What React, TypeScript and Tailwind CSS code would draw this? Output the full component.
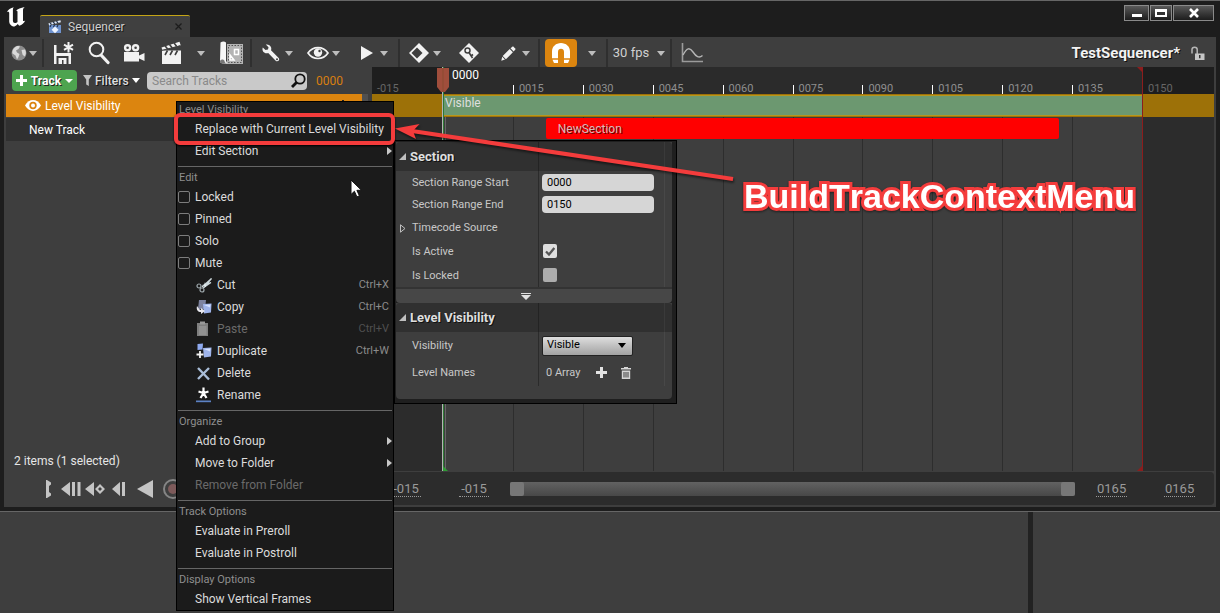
import React from "react";

type Kids = { children?: React.ReactNode };

const Caret = ({ dark = false }: { dark?: boolean }) => (
  <svg width="8" height="5" viewBox="0 0 8 5" className={dark ? "shrink-0 text-black" : "shrink-0 text-[#bdbdbd]"}>
    <path d="M0 0h8L4 5z" fill="currentColor" />
  </svg>
);

const Sep = () => <span className="h-full w-0.5 shrink-0 bg-[#2f2f2f]" />;

function Tool({ label, className, children }: Kids & { label: string; className: string }) {
  return (
    <button aria-label={label} className={`flex h-full shrink-0 items-center justify-center text-[#f2f2f2] ${className}`}>
      {children}
    </button>
  );
}

const UnrealLogo = () => (
  <svg width="20" height="20" viewBox="0 0 19 20" fill="#fff" className="ml-1.5 mt-1.5 shrink-0">
    <path d="M.3 5.2C1.5 2.600 4 .8 7.400.2 6.600 1 6.400 1.700 6.400 3v10.600c0 1.700.8 2.500 2 2.500 1 0 1.900-.5 2.600-1.200V5c0-1-.5-1.500-1.500-1.200C11.200 2 14.200.7 18.200 0c-1.200 1-1.700 2-1.700 3.200v10c0 1 .5 1.200 2.200.3-1 2.400-3.200 4.400-6 5.200l-1.500-1.700c-1 1.500-2.700 2.600-4.600 2.600-2.200-1-3.900-2.600-3.900-5.100V6.300c0-1.600-.9-1.900-2.400-1.100z" />
  </svg>
);

const SequencerIcon = () => (
  <svg width="14" height="14" viewBox="0 0 14 14">
    <path d="M1 5h12v8H1z" fill="#6f93cf" />
    <path d="M.5 3.200 12.500.2l.4 2L1 5.200z" fill="#dfe8f5" />
    <path d="m2 2.800 1.600 1.800M5.200 2l1.600 1.800M8.400 1.200 10 3M3 5 2 7M6.500 5l-1 2M10 5 9 7" stroke="#26344f" strokeWidth="1.200" />
    <path d="m7 6.500 3.500 3.200L7 13.200 3.600 9.700z" fill="#eef4ff" />
  </svg>
);

const GlobeIcon = () => (
  <svg width="16" height="16" viewBox="0 0 16 16">
    <circle cx="8" cy="8" r="7.500" fill="#8b8b8b" />
    <path d="M3 3.200C5 .8 8 .6 9 1.500L7.500 4 5 5.500 6 7.500 8.500 9 7.500 12 6 14.500 4.500 10.500 1.500 8.500C.8 6.500 2 4.500 3 3.200zM10.500 5 14 4.500c1.500 3 1 5-.5 7L11.500 9.500z" fill="#d9d9d9" />
  </svg>
);

const SaveIcon = () => (
  <svg width="22" height="24" viewBox="0 0 22 24" fill="currentColor">
    <path d="M2 4h2.500v8H9v2H4.500v9H2zM2 12h17v11h-2.500v-8H2z" />
    <path d="M6.500 17h8v6h-3v-4H10v4H6.500z" />
    <path d="M16.500 1v10.500M12 3.600l9 5.200M21 3.600l-9 5.200" stroke="currentColor" strokeWidth="2" />
  </svg>
);

const MagnifierIcon = () => (
  <svg width="22" height="24" viewBox="0 0 22 24" fill="none" stroke="currentColor">
    <circle cx="8.500" cy="8.500" r="6.800" strokeWidth="2" />
    <path d="m13.500 14.500 6.500 7" strokeWidth="3.200" strokeLinecap="round" />
  </svg>
);

const CameraIcon = () => (
  <svg width="22" height="20" viewBox="0 0 22 20" fill="currentColor">
    <path fillRule="evenodd" d="M4.600 1a3.700 3.700 0 1 1 0 7.400 3.700 3.700 0 0 1 0-7.400zm0 2.400a1.300 1.300 0 1 0 0 2.600 1.300 1.300 0 0 0 0-2.600zM12.600 1a3.700 3.700 0 1 1 0 7.400 3.700 3.700 0 0 1 0-7.400zm0 2.400a1.300 1.300 0 1 0 0 2.600 1.300 1.300 0 0 0 0-2.600z" />
    <path d="M1 9h15v9.500H1zM15 13l6.500-3v8L15 15z" />
  </svg>
);

const ClapperIcon = () => (
  <svg width="21" height="24" viewBox="0 0 21 24" fill="currentColor">
    <path d="M1 9.500h19V23H1z" />
    <path d="M.5 6.500 18.500.8l1.200 3.400L1.500 9.500z" />
    <path d="m4 4.800 2.600 3.200M8.500 3.500l2.600 3.200M13 2l2.600 3.200M6.500 9.500 4 14M11.500 9.500 9 14M16.500 9.500 14 14" stroke="#3e3e3e" strokeWidth="1.600" />
    <path d="M1 9.300 19 4.800" stroke="#3e3e3e" strokeWidth="1" />
  </svg>
);

const BlueprintIcon = () => (
  <svg width="25" height="24" viewBox="0 0 25 24">
    <path d="M8 3h16v20H5l3-3z" fill="#b4b4b4" />
    <path d="M9.500 4.500h13v17h-13z" fill="none" stroke="#555" strokeDasharray="1.500 1.500" />
    <path d="M15.500 8.500h4v5h-4zM11 14v5h4z" fill="none" stroke="#fff" strokeWidth="1.500" />
    <path d="M1.500 1.500c2-1.500 4-1.500 5.500 0v18c0 2 1 3 2 3H4c-1.800 0-3-1-3-2.500z" fill="#f6f6f6" />
    <path d="M1 20c1-2 4-2 4.500 0 .3 1.500 1 2.500 3 2.500H4C2 22.500 1 21.500 1 20z" fill="#777" />
  </svg>
);

const WrenchIcon = () => (
  <svg width="18" height="18" viewBox="0 0 18 18" fill="currentColor">
    <path d="M3.800.5 6.500 3.200 6 5.500 3.500 6 .8 3.500C-.2 6 1 8.500 3.500 9.200c1 .3 2 .1 2.700-.2l7.500 7.800c2 1.700 4.600-.8 3-2.800L9 6.300c.3-.8.400-1.800.1-2.700C8.400 1.200 6 0 3.800.5zM15 14.200a1 1 0 1 1 0 2 1 1 0 0 1 0-2z" fillRule="evenodd" />
  </svg>
);

const EyeIcon = () => (
  <svg width="22" height="14" viewBox="0 0 22 14">
    <path d="M1 7c5-7.300 15-7.300 20 0-5 7.300-15 7.300-20 0z" fill="none" stroke="currentColor" strokeWidth="1.700" />
    <circle cx="11" cy="6.500" r="4.200" fill="currentColor" />
    <circle cx="12.500" cy="5" r="1.200" fill="#3e3e3e" />
  </svg>
);

const KeyNextIcon = () => (
  <svg width="20" height="20" viewBox="0 0 20 20">
    <path d="M10 0l10 10-10 10L0 10z" fill="currentColor" />
    <path d="m8 4.500 5.500 5.500L8 15.500 2.500 10z" fill="#3e3e3e" />
  </svg>
);

const AutoKeyIcon = () => (
  <svg width="20" height="20" viewBox="0 0 20 20">
    <path d="M10 0l10 10-10 10L0 10z" fill="currentColor" />
    <circle cx="8.500" cy="7.500" r="2.500" fill="none" stroke="#3e3e3e" strokeWidth="1.500" />
    <path d="m10 9.500 3.500 5.500M12 13l2-1.500" stroke="#3e3e3e" strokeWidth="1.600" fill="none" />
  </svg>
);

const PencilIcon = () => (
  <svg width="15" height="15" viewBox="0 0 15 15" fill="currentColor">
    <path d="M9.500 2.300 12 .3 14.700 3l-2 2.500zM8.700 3.100l3.200 3.200-7 7L1.700 10zM1.200 10.800 4 13.600.3 14.700z" />
  </svg>
);

const MagnetIcon = () => (
  <svg width="20" height="22" viewBox="0 0 20 22" fill="#fff">
    <path d="M1 16.200V9.500C1 4.500 5 1 10 1s9 3.500 9 8.500v6.700h-6V10c0-2-1.200-3.200-3-3.200S7 8 7 10v6.200zM1.500 17.800H7V21H3zM13 17.800h5.500L17 21h-4z" />
  </svg>
);

const CurveIcon = () => (
  <svg width="22" height="20" viewBox="0 0 22 20" fill="none" stroke="#9b9b9b">
    <path d="M1.500 0v18.500H22" strokeWidth="1.600" />
    <path d="M2 12C6 4 9 4.500 12 9s6 6.500 9.500 3.500" stroke="#b5b5b5" strokeWidth="1.400" />
  </svg>
);

const UnlockIcon = () => (
  <svg width="14" height="15" viewBox="0 0 14 15">
    <path d="M1 7.500V3.500C1 .5 6.200.5 6.200 3.500V8" fill="none" stroke="#b5b5b5" strokeWidth="1.500" />
    <path d="M4 7.500h9.500V14H4z" fill="#c6c6c6" />
    <path d="M8 9h1.500v3.200H8z" fill="#333" />
  </svg>
);

const PlusIcon = ({ className }: { className: string }) => (
  <svg width="11" height="11" viewBox="0 0 11 11" className={className}>
    <path d="M4 0h3v4h4v3H7v4H4V7H0V4h4z" fill="currentColor" />
  </svg>
);

const TrashIcon = () => (
  <svg width="10" height="12" viewBox="0 0 10 12">
    <path d="M3 1V0h4v1h3v1.500H0V1zM.8 3.500h8.400V12H.8z" fill="#d6d6d6" />
    <path d="M3 5v5.500M5 5v5.500M7 5v5.500" stroke="#3e3e3e" />
  </svg>
);

/* ---------- title bar and toolbar ---------- */

function TitleBar() {
  const btn = "flex h-4 items-center justify-center border border-[#8a8a8a] bg-gradient-to-b from-[#5a5a5a] to-[#1d1d1d]";
  return (
    <header className="flex h-9 items-stretch">
      <UnrealLogo />
      <div className="ml-3.5 mt-3.5 flex w-[150px] items-center rounded-t-xs border-t border-[#c4a516] bg-[#404040] pl-2 pr-2 text-[12px] text-[#cfcfcf] [text-shadow:1px_1px_0_#1a1a1a]">
        <SequencerIcon />
        <span className="ml-1.5 flex-1">Sequencer</span>
        <button aria-label="Close tab">
          <svg width="7" height="7" viewBox="0 0 7 7" stroke="#1c1c1c" strokeWidth="1.300">
            <path d="m.5.500 6 6m0-6-6 6" />
          </svg>
        </button>
      </div>
      <div className="ml-auto mr-1.5 mt-1 flex gap-px">
        <button aria-label="Minimize" className={`${btn} w-[25px]`}>
          <span className="mt-1 h-[3px] w-2.5 bg-white" />
        </button>
        <button aria-label="Maximize" className={`${btn} w-[22px]`}>
          <span className="h-2 w-3 border-2 border-t-[3px] border-white bg-[#333]" />
        </button>
        <button aria-label="Close" className={`${btn} w-[41px]`}>
          <svg width="10" height="10" viewBox="0 0 10 10" stroke="#fff" strokeWidth="2.600">
            <path d="m1 1 8 8m0-8L1 9" />
          </svg>
        </button>
      </div>
    </header>
  );
}

function Toolbar() {
  return (
    <div className="flex h-[30px] items-stretch pt-0.5" role="toolbar" aria-label="Sequencer tools">
      <Tool label="World" className="w-[38px] gap-0.5 pl-0.5"><GlobeIcon /><Caret /></Tool>
      <Sep />
      <Tool label="Save" className="w-[38px]"><SaveIcon /></Tool>
      <Tool label="Find in content browser" className="w-[34px]"><MagnifierIcon /></Tool>
      <Tool label="Create camera" className="w-9"><CameraIcon /></Tool>
      <Tool label="Render movie" className="w-[38px]"><ClapperIcon /></Tool>
      <Tool label="Render options" className="w-[22px]"><Caret /></Tool>
      <Tool label="Director blueprint" className="w-[38px]"><BlueprintIcon /></Tool>
      <Sep />
      <Tool label="Actions" className="w-[50px] gap-[5px]"><WrenchIcon /><Caret /></Tool>
      <Tool label="View options" className="w-[42px] gap-[3px]"><EyeIcon /><Caret /></Tool>
      <Tool label="Playback options" className="w-[54px] gap-[7px] pl-1.5">
        <svg width="12" height="14" viewBox="0 0 12 14" fill="currentColor"><path d="M0 0l12 7-12 7z" /></svg>
        <Caret />
      </Tool>
      <Sep />
      <Tool label="Key options" className="w-[50px] gap-1"><KeyNextIcon /><Caret /></Tool>
      <Tool label="Auto key" className="w-[38px]"><AutoKeyIcon /></Tool>
      <Tool label="Edit options" className="w-[50px] gap-1.5 pl-1"><PencilIcon /><Caret /></Tool>
      <Sep />
      <Tool label="Snapping" className="ml-[5px] w-8 rounded-sm bg-[#dc850f]"><MagnetIcon /></Tool>
      <Tool label="Snapping options" className="w-[29px]"><Caret /></Tool>
      <Sep />
      <Tool label="Frame rate" className="w-[62px] gap-2"><span className="text-[13px] text-[#d0d0d0]">30 fps</span><Caret /></Tool>
      <Sep />
      <Tool label="Curve editor" className="w-10"><CurveIcon /></Tool>
      <h1 className="ml-auto self-center text-[15px] leading-5 font-bold text-[#f2f2f2] [text-shadow:1px_1px_0_#111]">TestSequencer*</h1>
      <Tool label="Unlock" className="w-9"><UnlockIcon /></Tool>
    </div>
  );
}

/* ---------- outliner ---------- */

const Transport = () => (
  <div className="flex h-9 items-center pl-[34px] text-[#c4c4c4]">
    {[
      { label: "Set start", cls: "w-5", w: 5, d: "M0 0h1L5 2.500V4.500L3 6v6l2 1.500v2L1 18H0z" },
      { label: "Go to front", cls: "w-[26px]", w: 20, d: "M9 2v14L0 9zM11 2h3v14h-3zM16.500 2h3v14h-3z" },
      { label: "Previous key", cls: "w-[22px]", w: 20, d: "M9 2v14L0 9zM15 4l5 5-5 5-5-5zm0 3-2 2 2 2 2-2z" },
      { label: "Step back", cls: "w-[26px]", w: 14, d: "M8 2v14L0 9zM10 2h3v14h-3z" },
      { label: "Play reverse", cls: "w-[26px]", w: 16, d: "M16 0v18L0 9z" },
    ].map((b) => (
      <button key={b.label} aria-label={b.label} className={`flex shrink-0 justify-center ${b.cls}`}>
        <svg width={b.w} height="18" viewBox={`0 0 ${b.w} 18`} fill="currentColor" fillRule="evenodd"><path d={b.d} /></svg>
      </button>
    ))}
    <button aria-label="Record" className="ml-[5px] size-5 shrink-0 rounded-full border-2 border-[#858585] p-[3px]">
      <span className="block size-full rounded-full bg-[#7d5a5a]" />
    </button>
  </div>
);

function Outliner() {
  return (
    <section className="flex w-[368px] shrink-0 flex-col" aria-label="Tracks">
      <div className="flex h-[27px] items-center pl-2">
        <button className="flex h-[21px] w-[65px] items-center justify-center gap-1 rounded-sm bg-[#4da44f] text-[12px] font-bold text-white [text-shadow:1px_1px_0_#222]">
          <PlusIcon className="text-white" />
          Track
          <svg width="8" height="4" viewBox="0 0 8 4"><path d="M0 0h8L4 4z" fill="#fff" /></svg>
        </button>
        <button className="ml-1.5 flex w-[57px] items-center gap-[3px] text-[12px] font-medium text-[#dedede] [text-shadow:1px_1px_0_#111]">
          <svg width="9" height="11" viewBox="0 0 9 11"><path d="M0 0h9L5.800 4.500V11L3.200 9.500v-5z" fill="#c4c4c4" /></svg>
          Filters
          <svg width="8" height="5" viewBox="0 0 8 5"><path d="M0 0h8L4 5z" fill="#fff" /></svg>
        </button>
        <div className="ml-[7px] flex h-[18px] w-40 items-center rounded-sm bg-[#c9c9c9] pl-[5px] pr-px">
          <input type="search" aria-label="Search Tracks" placeholder="Search Tracks" className="w-full min-w-0 bg-transparent text-[12px] leading-4 text-black outline-none placeholder:text-[#8a8a8a]" />
          <svg width="15" height="15" viewBox="0 0 15 15" fill="none" stroke="#111" className="shrink-0">
            <circle cx="9" cy="6" r="4.700" strokeWidth="1.800" />
            <path d="m5.500 9.500-4.500 4.500" strokeWidth="2.800" />
          </svg>
        </div>
        <span className="ml-[9px] text-[12px] text-[#d97f10]">0000</span>
      </div>

      <ul className="flex-1 text-[12px] text-white">
        <li className="flex h-[23px]">
          <div className="ml-0.5 flex w-[356px] items-center bg-[#dc850f] pl-[19px]">
            <svg width="16" height="11" viewBox="0 0 16 11">
              <path d="M0 5.500c4-7.200 12-7.200 16 0-4 7.200-12 7.200-16 0z" fill="#fff" />
              <circle cx="8" cy="5.500" r="3.700" fill="#dc850f" />
              <circle cx="8" cy="5.500" r="2" fill="#fff" />
            </svg>
            <span className="ml-1">Level Visibility</span>
            <svg width="10" height="12" viewBox="0 0 10 12" className="ml-auto mr-3.5"><path d="M4 0h2v4h4v3H6v4H4V7H0V4h4z" fill="#222" /></svg>
          </div>
          <div className="w-1.5 bg-[#505050]" />
        </li>
        <li className="ml-0.5 mt-px flex h-[23px] w-[362px] items-center bg-[#303030] pl-[23px]">New Track</li>
      </ul>
      <p className="flex h-5 items-center pl-2.5 text-[12px] text-[#e6e6e6]">2 items (1 selected)</p>
      <Transport />
    </section>
  );
}

/* ---------- timeline ---------- */

const TIMES = ["0000", "0015", "0030", "0045", "0060", "0075", "0090", "0105", "0120", "0135"];
const COLS = "grid grid-cols-[71px_repeat(10,minmax(0,1fr))_72px]";

const RangeValue = ({ children, className }: Kids & { className: string }) => (
  <button className={`h-4 border-b border-dotted border-[#9a9a9a] px-px leading-4 ${className}`}>{children}</button>
);

function Timeline() {
  return (
    <section className="mr-0.5 flex min-w-0 flex-1 flex-col" aria-label="Timeline">
      <div className="relative flex flex-1 flex-col">
        <div className={`${COLS} h-[27px] items-stretch bg-[#2b2b2b] text-[11px] text-[#8f8f8f]`}>
          <div className="flex items-end bg-[#1e1e1e] pl-[5px] leading-2.5 text-[#666]">-015</div>
          {TIMES.map((t, i) => (
            <div key={t} className={i === 0 ? "pl-[9px] text-[12px] leading-4 text-white" : "flex items-end"}>
              {i > 0 && <span className="mr-[5px] h-[9px] w-px bg-white" />}
              <span className={i > 0 ? "leading-2.5" : ""}>{t}</span>
            </div>
          ))}
          <div className="flex items-end bg-[#1e1e1e] text-[#666]">
            <span className="mr-[5px] h-[9px] w-px bg-[#bbb]" />
            <span className="leading-2.5">0150</span>
          </div>
        </div>

        <div className="flex h-[23px] bg-[#9d7108]">
          <div className="ml-[71px] mr-[72px] mt-px mb-px flex-1 border-y border-[#b8961c] bg-[#6c9870] pl-0.5 text-[12px] leading-[14px] text-[#dfdfdf]">Visible</div>
        </div>

        <div className={`${COLS} min-h-[354px] flex-1`}>
          <div className="bg-[#2c2c2c]" />
          <div className="col-span-10 col-start-2 row-start-1 grid grid-cols-10">
            {TIMES.map((t) => (
              <div key={t} className="border-l border-[#2d2d2d]" />
            ))}
          </div>
          <div className="col-span-10 col-start-2 row-start-1">
            <div className="ml-[14.7%] mt-px flex h-[21px] w-[73.4%] items-center rounded-xs bg-[#ff0000] pl-3 text-[12px] text-[#dcb8b8] [text-shadow:1px_1px_0_#600]">NewSection</div>
          </div>
          <div className="col-start-12 bg-[#2c2c2c]" />
        </div>

        <div className="absolute inset-y-0 left-[70px] w-px bg-[#b4b4b4]" />
        <div className="absolute inset-y-0 left-[71px] w-px bg-[#2f7a35]" />
        <div className="absolute bottom-0 left-[73px] top-[50px] w-px bg-[#666]" />
        <svg width="12" height="25" viewBox="0 0 12 25" className="absolute left-[65px] top-px">
          <path d="M0 0h12v19l-4 5H4l-4-5z" fill="#a04e3c" />
          <path d="M6 0v24" stroke="#8a4a30" />
        </svg>
        <div className="absolute inset-y-0 right-[71px] w-px bg-[#8c1d1d]" />
        <svg width="5" height="5" viewBox="0 0 5 5" className="absolute right-[72px] top-0"><path d="M0 0h5v5z" fill="#8c1d1d" /></svg>
        <svg width="5" height="5" viewBox="0 0 5 5" className="absolute bottom-0 right-[72px]"><path d="M5 0v5H0z" fill="#8c1d1d" /></svg>
        <svg width="5" height="5" viewBox="0 0 5 5" className="absolute bottom-0 left-[71px]"><path d="M0 0v5h5z" fill="#2f9a35" /></svg>
      </div>

      <div className="mb-0.5 mt-px flex h-[33px] items-center rounded-sm bg-[#2c2c2c] pl-[19px] pr-[19px] text-[13px] text-[#9a9a9a]">
        <RangeValue className="w-[30px]">-015</RangeValue>
        <RangeValue className="ml-[38px] w-[30px]">-015</RangeValue>
        <div className="ml-[21px] flex h-3.5 flex-1 justify-between rounded-xs bg-gradient-to-b from-[#626262] to-[#484848]">
          <span className="w-3.5 rounded-xs bg-[#777]" />
          <span className="w-3.5 rounded-xs bg-[#777]" />
        </div>
        <RangeValue className="ml-[21px] w-[31px]">0165</RangeValue>
        <RangeValue className="ml-[37px] w-[31px]">0165</RangeValue>
      </div>
    </section>
  );
}

/* ---------- context menu ---------- */

const Heading = ({ children, className = "h-[18px] pt-0.5" }: Kids & { className?: string }) => (
  <div className={`flex items-center pl-0.5 text-[11px] text-[#8e8e8e] ${className}`}>{children}</div>
);

const Rule = () => (
  <div className="h-1.5 px-px pt-1"><hr className="border-t border-[#666]" /></div>
);

const CheckItem = ({ children }: Kids) => (
  <label className="flex h-[22px] items-center gap-[5px] pl-px">
    <input type="checkbox" className="size-3 appearance-none rounded-xs border border-[#7d7d7d]" />
    {children}
  </label>
);

function Item({ children, icon, keys, submenu, disabled }: Kids & { icon?: React.ReactNode; keys?: string; submenu?: boolean; disabled?: boolean }) {
  return (
    <button disabled={disabled} className={`flex h-[22px] w-full items-center pl-[18px] text-left ${submenu ? "pr-px" : "pr-1"} ${disabled ? "text-[#6a6a6a]" : ""}`}>
      {icon && <span className="flex w-[22px] pl-px">{icon}</span>}
      <span className="flex-1 whitespace-nowrap">{children}</span>
      {keys && <span className={disabled ? "text-[11px] text-[#505050]" : "text-[11px] text-[#8b8b8b]"}>{keys}</span>}
      {submenu && (
        <svg width="5" height="8" viewBox="0 0 5 8"><path d="M0 0l5 4-5 4z" fill="#c8c8c8" /></svg>
      )}
    </button>
  );
}

const CutIcon = (
  <svg width="16" height="16" viewBox="0 0 16 16" fill="none">
    <path d="M6 10 15.500 1.500 8 10.500M6.500 8.500 15 5.500 7 11" stroke="#cdd9dd" strokeWidth="1.200" />
    <circle cx="3" cy="9" r="2" stroke="#9ea8ac" strokeWidth="1.200" />
    <circle cx="6" cy="13" r="2" stroke="#9ea8ac" strokeWidth="1.200" />
    <path d="m9 5-1 4 2 1z" fill="#e8f0f2" />
  </svg>
);
const CopyIcon = (
  <svg width="16" height="16" viewBox="0 0 16 16">
    <path d="M3 1h7l-1 9H2z" fill="#7d83a0" />
    <path d="m7 5 8.500-.5-.5 9-7 1z" fill="#9fb4ea" />
    <path d="m8 6 6.500-.5-.5 3z" fill="#d4e0ff" />
    <path d="M1 7c-1 4 1 6 4 6v2l4-3-4-3v2c-1.500 0-2-1.500-4-4z" fill="#e8e8ee" />
  </svg>
);
const PasteIcon = (
  <svg width="14" height="16" viewBox="0 0 14 16">
    <path d="M1 2h11v13H1z" fill="#7f7f7f" />
    <path d="M4 .5h5v3H4z" fill="#999" />
    <path d="M3 5h7.500v9H3z" fill="#919191" />
  </svg>
);
const DuplicateIcon = (
  <svg width="16" height="16" viewBox="0 0 16 16">
    <path d="M1.500 1 7 .5l-.5 6-5 .5z" fill="#8faaf0" />
    <path d="m7 5 8.500-.5-.5 9-7 1z" fill="#9fb4ea" />
    <path d="m8 6 6.500-.5-.5 3z" fill="#d4e0ff" />
    <path d="M4 8v7M.5 11.500h7" stroke="#f2f2f2" strokeWidth="1.800" />
  </svg>
);
const DeleteIcon = (
  <svg width="15" height="15" viewBox="0 0 15 15" stroke="#a9bdd8" strokeWidth="2.400">
    <path d="m2 2 11 11.500M13 2 2 13" />
  </svg>
);
const RenameIcon = (
  <svg width="15" height="16" viewBox="0 0 15 16">
    <path d="M7.500.5V6M2.500 4.500l5 1.500M12.500 4.500l-5 1.500M7.500 6l-3 5M7.500 6l3 5" stroke="#fff" strokeWidth="2.200" />
    <path d="M0 13.500h15v1.700H0z" fill="#5c82c4" />
  </svg>
);

function ContextMenu() {
  return (
    <nav aria-label="Track menu" className="absolute left-44 top-[101px] w-[218px] border border-black bg-[#1b1b1b] text-[12px] text-[#dcdcdc]">
      <Heading className="h-4">Level Visibility</Heading>
      <Item>Replace with Current Level Visibility</Item>
      <Item submenu>Edit Section</Item>
      <Rule />
      <Heading>Edit</Heading>
      <CheckItem>Locked</CheckItem>
      <CheckItem>Pinned</CheckItem>
      <CheckItem>Solo</CheckItem>
      <CheckItem>Mute</CheckItem>
      <Item icon={CutIcon} keys="Ctrl+X">Cut</Item>
      <Item icon={CopyIcon} keys="Ctrl+C">Copy</Item>
      <Item icon={PasteIcon} keys="Ctrl+V" disabled>Paste</Item>
      <Item icon={DuplicateIcon} keys="Ctrl+W">Duplicate</Item>
      <Item icon={DeleteIcon}>Delete</Item>
      <Item icon={RenameIcon}>Rename</Item>
      <Rule />
      <Heading>Organize</Heading>
      <Item submenu>Add to Group</Item>
      <Item submenu>Move to Folder</Item>
      <Item disabled>Remove from Folder</Item>
      <Rule />
      <Heading>Track Options</Heading>
      <Item>Evaluate in Preroll</Item>
      <Item>Evaluate in Postroll</Item>
      <Rule />
      <Heading>Display Options</Heading>
      <Item>Show Vertical Frames</Item>
    </nav>
  );
}

/* ---------- section properties ---------- */

function Category({ children }: Kids) {
  return (
    <div className="flex h-[29px] rounded-t-sm bg-[#303030]">
      <h2 className="flex w-[143px] items-center gap-1 border-r border-[#232323] pl-[3px] text-[13px] font-bold whitespace-nowrap text-[#dedede] [text-shadow:1px_1px_0_#111]">
        <svg width="7" height="7" viewBox="0 0 7 7"><path d="M7 0v7H0z" fill="#c0c0c0" /></svg>
        {children}
      </h2>
      <div className="w-[126px] border-r border-[#3a3a3a]" />
    </div>
  );
}

function Property({ label, htmlFor, height, expandable, children }: Kids & { label: string; htmlFor?: string; height: string; expandable?: boolean }) {
  return (
    <div className={`flex ${height}`}>
      <div className="flex w-[143px] items-center border-r border-[#2b2b2b] pt-0.5">
        <span className="w-4 pl-1">
          {expandable && (
            <svg width="6" height="9" viewBox="0 0 6 9"><path d="M.5.800 5 4.500.5 8.200z" fill="none" stroke="#c0c0c0" /></svg>
          )}
        </span>
        <label htmlFor={htmlFor}>{label}</label>
      </div>
      <div className="flex w-[126px] items-center border-r border-[#484848] pl-[3px]">{children}</div>
    </div>
  );
}

function SectionPanel() {
  const field = "h-[17px] w-28 rounded-sm bg-[#d6d6d6] px-[5px] text-[11px] text-black";
  return (
    <aside aria-label="Section properties" className="absolute left-[394px] top-[140px] w-[283px] border border-black bg-[#1f1f1f] pl-px pr-1 pb-1 pt-px text-[11px] text-[#c8c8c8]">
      <div className="bg-[#3e3e3e]">
        <Category>Section</Category>
        <Property label="Section Range Start" htmlFor="start" height="h-[22px]">
          <input id="start" defaultValue="0000" className={field} />
        </Property>
        <Property label="Section Range End" htmlFor="end" height="h-[22px]">
          <input id="end" defaultValue="0150" className={field} />
        </Property>
        <Property label="Timecode Source" height="h-6" expandable />
        <Property label="Is Active" htmlFor="active" height="h-6">
          <span className="relative ml-px flex size-3.5">
            <input id="active" type="checkbox" defaultChecked className="size-3.5 appearance-none rounded-xs bg-[#dedede]" />
            <svg width="10" height="9" viewBox="0 0 10 9" className="pointer-events-none absolute left-0.5 top-[3px]">
              <path d="m1 4.500 3 3L9.300 1" fill="none" stroke="#555" strokeWidth="2.300" />
            </svg>
          </span>
        </Property>
        <Property label="Is Locked" htmlFor="locked" height="h-6">
          <input id="locked" type="checkbox" className="ml-px size-3.5 appearance-none rounded-xs bg-[#adadad]" />
        </Property>
      </div>
      <button aria-label="Show advanced" className="flex h-4 w-full items-center justify-center rounded-b-sm border-t-2 border-[#333] bg-[#474747] pr-4">
        <svg width="10" height="7" viewBox="0 0 10 7" fill="#e0e0e0"><path d="M0 0h10v1H0zM0 2h10L5 7z" /></svg>
      </button>
      <div className="rounded-b-sm bg-[#3e3e3e] pb-[13px]">
        <Category>Level Visibility</Category>
        <Property label="Visibility" htmlFor="visibility" height="h-[27px]">
          <span className="relative flex items-center">
            <select id="visibility" className="h-5 w-[91px] appearance-none rounded-xs border border-[#222] bg-gradient-to-b from-[#dedede] to-[#a2a2a2] pl-1 text-[11px] text-black">
              <option>Visible</option>
            </select>
            <span className="pointer-events-none absolute right-[7px]"><Caret dark /></span>
          </span>
        </Property>
        <Property label="Level Names" height="h-[27px]">
          <span className="ml-1 w-[50px] pt-0.5 whitespace-nowrap">0 Array</span>
          <button aria-label="Add element"><PlusIcon className="text-[#e2e2e2]" /></button>
          <button aria-label="Remove all elements" className="ml-3.5"><TrashIcon /></button>
        </Property>
      </div>
    </aside>
  );
}

/* ---------- callout ---------- */

function Callout() {
  return (
    <div className="pointer-events-none absolute inset-0 overflow-hidden">
      <div className="absolute left-[174px] top-[113px] h-8 w-[221px] rounded-md border-4 border-[#f43c3c] shadow-[0_1px_2px_#000]" />
      <svg width="350" height="70" viewBox="0 0 350 70" className="absolute left-[390px] top-[120px] drop-shadow-[1px_2px_1px_rgba(0,0,0,0.5)]">
        <path d="M22 11 343 59" stroke="#f43c3c" strokeWidth="4" />
        <path d="M5 8.500 29.500 4 23 11l3 8z" fill="#f43c3c" />
      </svg>
      <p className="absolute left-[744px] top-[176px] font-['Liberation_Sans',sans-serif] text-[34px] leading-10 font-bold text-white drop-shadow-[0_1px_1px_rgba(0,0,0,0.5)] [font-kerning:none] [paint-order:stroke_fill] [-webkit-text-stroke:6px_#f43c3c] [stroke-linejoin:round]">
        BuildTrackContextMenu
      </p>
      <svg width="12" height="19" viewBox="0 0 12 19" className="absolute left-[350px] top-[179px]">
        <path d="M1 1v14.500l3.400-3.200 2.500 5.600 2.500-1.100-2.500-5.500h4.600z" fill="#fff" stroke="#111" />
      </svg>
    </div>
  );
}

export default function App() {
  return (
    <div className="relative flex min-h-screen flex-col overflow-hidden bg-[#3e3e3e] font-[Roboto,sans-serif]">
      <main className="border-y border-[#666] bg-[#1d1d1d] px-1 pb-1">
        <div className="-mx-1"><TitleBar /></div>
        <div className="bg-[#3e3e3e]">
          <Toolbar />
          <div className="flex">
            <Outliner />
            <Timeline />
          </div>
        </div>
      </main>
      <div className="flex flex-1 justify-end">
        <div className="mr-[187px] w-[5px] bg-[#222]" />
      </div>
      <ContextMenu />
      <SectionPanel />
      <Callout />
    </div>
  );
}
